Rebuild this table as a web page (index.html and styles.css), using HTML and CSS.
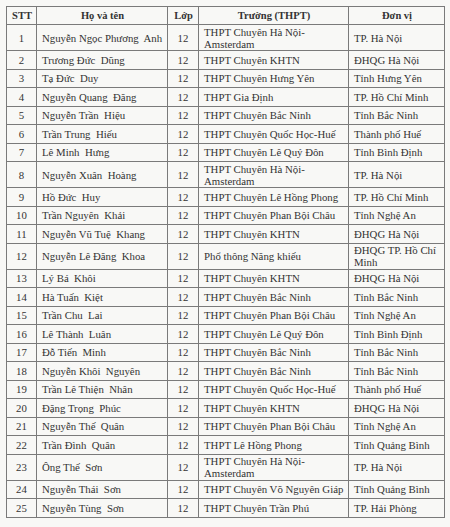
FILE: index.html
```html
<!DOCTYPE html>
<html lang="vi">
<head>
<meta charset="utf-8">
<title>Danh sách</title>
<link rel="stylesheet" href="styles.css">
</head>
<body>
<table class="list">
  <colgroup>
    <col class="c-stt"><col class="c-name"><col class="c-lop"><col class="c-school"><col class="c-unit">
  </colgroup>
  <thead>
    <tr class="head"><th>STT</th><th>Họ và tên</th><th>Lớp</th><th>Trường (THPT)</th><th>Đơn vị</th></tr>
  </thead>
  <tbody>
    <tr class="dbl"><td class="num">1</td><td class="name">Nguyễn Ngọc Phương  Anh</td><td class="num">12</td><td>THPT Chuyên Hà Nội-<br>Amsterdam</td><td>TP. Hà Nội</td></tr>
    <tr><td class="num">2</td><td class="name">Trương Đức  Dũng</td><td class="num">12</td><td>THPT Chuyên KHTN</td><td>ĐHQG Hà Nội</td></tr>
    <tr><td class="num">3</td><td class="name">Tạ Đức  Duy</td><td class="num">12</td><td>THPT Chuyên Hưng Yên</td><td>Tỉnh Hưng Yên</td></tr>
    <tr><td class="num">4</td><td class="name">Nguyễn Quang  Đăng</td><td class="num">12</td><td>THPT Gia Định</td><td>TP. Hồ Chí Minh</td></tr>
    <tr><td class="num">5</td><td class="name">Nguyễn Trần  Hiệu</td><td class="num">12</td><td>THPT Chuyên Bắc Ninh</td><td>Tỉnh Bắc Ninh</td></tr>
    <tr><td class="num">6</td><td class="name">Trần Trung  Hiếu</td><td class="num">12</td><td>THPT Chuyên Quốc Học-Huế</td><td>Thành phố Huế</td></tr>
    <tr><td class="num">7</td><td class="name">Lê Minh  Hưng</td><td class="num">12</td><td>THPT Chuyên Lê Quý Đôn</td><td>Tỉnh Bình Định</td></tr>
    <tr class="dbl"><td class="num">8</td><td class="name">Nguyễn Xuân  Hoàng</td><td class="num">12</td><td>THPT Chuyên Hà Nội-<br>Amsterdam</td><td>TP. Hà Nội</td></tr>
    <tr><td class="num">9</td><td class="name">Hồ Đức  Huy</td><td class="num">12</td><td>THPT Chuyên Lê Hồng Phong</td><td>TP. Hồ Chí Minh</td></tr>
    <tr><td class="num">10</td><td class="name">Trần Nguyên  Khải</td><td class="num">12</td><td>THPT Chuyên Phan Bội Châu</td><td>Tỉnh Nghệ An</td></tr>
    <tr><td class="num">11</td><td class="name">Nguyễn Vũ Tuệ  Khang</td><td class="num">12</td><td>THPT Chuyên KHTN</td><td>ĐHQG Hà Nội</td></tr>
    <tr class="dbl"><td class="num">12</td><td class="name">Nguyễn Lê Đăng  Khoa</td><td class="num">12</td><td>Phổ thông Năng khiếu</td><td>ĐHQG TP. Hồ Chí<br>Minh</td></tr>
    <tr><td class="num">13</td><td class="name">Lý Bá  Khôi</td><td class="num">12</td><td>THPT Chuyên KHTN</td><td>ĐHQG Hà Nội</td></tr>
    <tr><td class="num">14</td><td class="name">Hà Tuấn  Kiệt</td><td class="num">12</td><td>THPT Chuyên Bắc Ninh</td><td>Tỉnh Bắc Ninh</td></tr>
    <tr><td class="num">15</td><td class="name">Trần Chu  Lai</td><td class="num">12</td><td>THPT Chuyên Phan Bội Châu</td><td>Tỉnh Nghệ An</td></tr>
    <tr><td class="num">16</td><td class="name">Lê Thành  Luân</td><td class="num">12</td><td>THPT Chuyên Lê Quý Đôn</td><td>Tỉnh Bình Định</td></tr>
    <tr><td class="num">17</td><td class="name">Đỗ Tiến  Minh</td><td class="num">12</td><td>THPT Chuyên Bắc Ninh</td><td>Tỉnh Bắc Ninh</td></tr>
    <tr><td class="num">18</td><td class="name">Nguyễn Khôi  Nguyên</td><td class="num">12</td><td>THPT Chuyên Bắc Ninh</td><td>Tỉnh Bắc Ninh</td></tr>
    <tr><td class="num">19</td><td class="name">Trần Lê Thiện  Nhân</td><td class="num">12</td><td>THPT Chuyên Quốc Học-Huế</td><td>Thành phố Huế</td></tr>
    <tr><td class="num">20</td><td class="name">Đặng Trọng  Phúc</td><td class="num">12</td><td>THPT Chuyên KHTN</td><td>ĐHQG Hà Nội</td></tr>
    <tr><td class="num">21</td><td class="name">Nguyễn Thế  Quân</td><td class="num">12</td><td>THPT Chuyên Phan Bội Châu</td><td>Tỉnh Nghệ An</td></tr>
    <tr><td class="num">22</td><td class="name">Trần Đình  Quân</td><td class="num">12</td><td>THPT Lê Hồng Phong</td><td>Tỉnh Quảng Bình</td></tr>
    <tr class="dbl"><td class="num">23</td><td class="name">Ông Thế  Sơn</td><td class="num">12</td><td>THPT Chuyên Hà Nội-<br>Amsterdam</td><td>TP. Hà Nội</td></tr>
    <tr><td class="num">24</td><td class="name">Nguyễn Thái  Sơn</td><td class="num">12</td><td>THPT Chuyên Võ Nguyên Giáp</td><td>Tỉnh Quảng Bình</td></tr>
    <tr><td class="num">25</td><td class="name">Nguyễn Tùng  Sơn</td><td class="num">12</td><td>THPT Chuyên Trần Phú</td><td>TP. Hải Phòng</td></tr>
  </tbody>
</table>
</body>
</html>
```

FILE: styles.css
```css
html, body {
  margin: 0;
  background: #f8f8f6;
}
body {
  padding: 6px 0 0 6px;
  font-family: "Liberation Serif", "Times New Roman", serif;
  font-size: 10.8px;
  color: #333;
}
.list {
  border-collapse: collapse;
  table-layout: fixed;
  width: 438px;
}
.c-stt { width: 30px; }
.c-name { width: 131px; }
.c-lop { width: 31px; }
.c-school { width: 150px; }
.c-unit { width: 96px; }
.list th, .list td {
  border: 1px solid #7a7a7a;
  padding: 0 4px 0 5px;
  line-height: 12px;
  vertical-align: middle;
  text-align: left;
  white-space: nowrap;
  overflow: hidden;
}
.list th {
  font-weight: bold;
  text-align: center;
  font-size: 10.5px;
}
.list .num {
  text-align: center;
  padding: 0;
}
.list .name {
  white-space: pre;
}
.head { height: 18px; }
.list tbody tr { height: 18.5px; }
.list tbody tr.dbl { height: 26px; }
```
